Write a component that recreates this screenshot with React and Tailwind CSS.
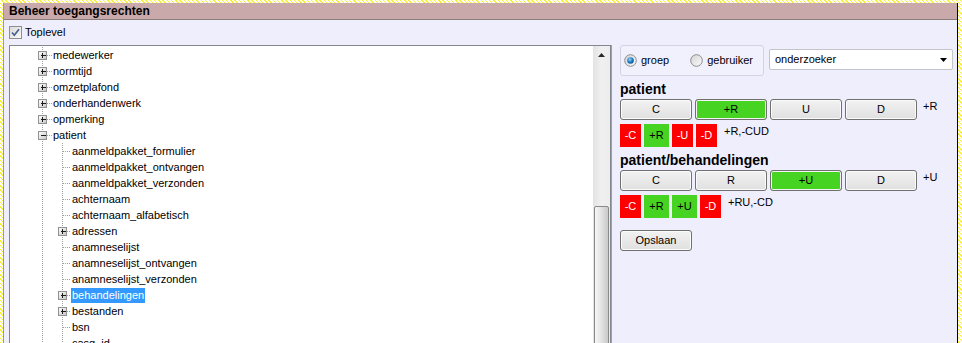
const treeRows = [
  { level: 0, text: 'medewerker', exp: '+' },
  { level: 0, text: 'normtijd', exp: '+' },
  { level: 0, text: 'omzetplafond', exp: '+' },
  { level: 0, text: 'onderhandenwerk', exp: '+' },
  { level: 0, text: 'opmerking', exp: '+' },
  { level: 0, text: 'patient', exp: '-' },
  { level: 1, text: 'aanmeldpakket_formulier' },
  { level: 1, text: 'aanmeldpakket_ontvangen' },
  { level: 1, text: 'aanmeldpakket_verzonden' },
  { level: 1, text: 'achternaam' },
  { level: 1, text: 'achternaam_alfabetisch' },
  { level: 1, text: 'adressen', exp: '+' },
  { level: 1, text: 'anamneselijst' },
  { level: 1, text: 'anamneselijst_ontvangen' },
  { level: 1, text: 'anamneselijst_verzonden' },
  { level: 1, text: 'behandelingen', exp: '+', selected: true },
  { level: 1, text: 'bestanden', exp: '+' },
  { level: 1, text: 'bsn' },
  { level: 1, text: 'casg_id' },
]

const sections = [
  {
    title: 'patient',
    buttons: [
      ['C', false],
      ['+R', true],
      ['U', false],
      ['D', false],
    ],
    summary: '+R',
    chips: [
      ['-C', 'red', 21],
      ['+R', 'green', 25],
      ['-U', 'red', 21],
      ['-D', 'red', 21],
    ],
    detail: '+R,-CUD',
  },
  {
    title: 'patient/behandelingen',
    buttons: [
      ['C', false],
      ['R', false],
      ['+U', true],
      ['D', false],
    ],
    summary: '+U',
    chips: [
      ['-C', 'red', 21],
      ['+R', 'green', 25],
      ['+U', 'green', 25],
      ['-D', 'red', 21],
    ],
    detail: '+RU,-CD',
  },
]

const Dots = (props) => (
  <line stroke="#a0a0a0" strokeDasharray="1 1" {...props} />
)

const Expander = ({ cx, sign }) => (
  <g>
    <rect x={cx - 3.5} y="4.5" width="8" height="8" fill="url(#expGrad)" stroke="#919191" />
    <line x1={cx - 1.5} y1="8.5" x2={cx + 3.5} y2="8.5" stroke="#1b1b1b" />
    {sign === '+' && <line x1={cx + 0.5} y1="6" x2={cx + 0.5} y2="11" stroke="#1b1b1b" />}
  </g>
)

const TreeRow = ({ level, text, exp, selected }) => {
  const w = level === 0 ? 42 : 61
  return (
    <div className="flex h-[16px] items-center">
      <svg width={w} height="16" className="shrink-0" shapeRendering="crispEdges">
        <Dots x1="32.5" y1="0" x2="32.5" y2="16" />
        {level === 1 && <Dots x1="52.5" y1="0" x2="52.5" y2="16" />}
        {level === 0 && exp && <Dots x1="37" y1="8.5" x2="42" y2="8.5" />}
        {level === 0 && exp && <Expander cx={32} sign={exp} />}
        {level === 1 && !exp && <Dots x1="53" y1="8.5" x2="61" y2="8.5" />}
        {level === 1 && exp && <Dots x1="57" y1="8.5" x2="61" y2="8.5" />}
        {level === 1 && exp && <Expander cx={52} sign={exp} />}
      </svg>
      <span
        className={`px-[1px] text-[11px] leading-[15px] whitespace-nowrap ${
          selected ? 'bg-[#3399ff] text-white' : 'text-black'
        }`}
      >
        {text}
      </span>
    </div>
  )
}

const Radio = ({ checked, id }) => (
  <svg width="13" height="13" className="shrink-0">
    <defs>
      <linearGradient id={`rg${id}`} x1="0" y1="0" x2="1" y2="1">
        <stop offset="0" stopColor="#d4d4d4" />
        <stop offset="1" stopColor="#fbfbfb" />
      </linearGradient>
      <radialGradient id={`rd${id}`} cx="0.4" cy="0.35" r="0.7">
        <stop offset="0" stopColor="#8fd6ff" />
        <stop offset="0.6" stopColor="#1d78c0" />
        <stop offset="1" stopColor="#0d4f8c" />
      </radialGradient>
    </defs>
    <circle cx="6.5" cy="6.5" r="5.8" fill={`url(#rg${id})`} stroke="#8c8c8c" />
    {checked && <circle cx="6.5" cy="6.5" r="3.3" fill={`url(#rd${id})`} />}
  </svg>
)

const GrayButton = ({ label, active }) => (
  <div
    className={`w-[72px] h-[21px] flex items-center justify-center rounded-[3px] border border-[#707070] text-[11px] text-black ${
      active
        ? 'bg-[#47d322] shadow-[inset_0_0_0_1px_#f4f4f4]'
        : 'bg-gradient-to-b from-[#f2f2f2] to-[#e0e0e0] shadow-[inset_0_0_0_1px_#fbfbfb]'
    }`}
  >
    {label}
  </div>
)

export default function App() {
  return (
    <div className="w-[962px] h-[343px] overflow-hidden pt-[3px] pl-[3px] pr-[4px] bg-[repeating-linear-gradient(45deg,#f7ef3a_0px,#f7ef3a_1px,#fffef0_1px,#fffef0_3px)] font-['Liberation_Sans',Arial,sans-serif]">
      <div className="h-[400px] bg-[#eeeefc] border-l border-l-[#9a9a9a] border-r border-r-black">
        {/* Header */}
        <div className="h-[17px] bg-[#c9a9a9] border-b border-b-[#8a7d7e] pl-[5px] flex items-center">
          <span className="text-[12px] font-bold leading-[16px] text-black">Beheer toegangsrechten</span>
        </div>

        {/* Toplevel */}
        <div className="h-[25px] flex items-center pl-[5px] gap-[3px]">
          <svg width="13" height="13" className="shrink-0" shapeRendering="crispEdges">
            <defs>
              <linearGradient id="cbGrad" x1="0" y1="0" x2="1" y2="1">
                <stop offset="0" stopColor="#d9d9d9" />
                <stop offset="1" stopColor="#fafafa" />
              </linearGradient>
            </defs>
            <rect x="0.5" y="0.5" width="12" height="12" fill="url(#cbGrad)" stroke="#8e8f8f" />
            <path d="M3 6.5 L5.3 9.2 L10 3.2" fill="none" stroke="#4b5f8e" strokeWidth="1.7" shapeRendering="auto" />
          </svg>
          <span className="text-[11px] text-black">Toplevel</span>
        </div>

        <div className="flex">
          {/* Tree */}
          <div className="ml-[5px] w-[602px] h-[310px] shrink-0 border border-[#828790] bg-white flex">
            <svg width="0" height="0" className="absolute">
              <defs>
                <linearGradient id="expGrad" x1="0" y1="0" x2="1" y2="1">
                  <stop offset="0" stopColor="#ffffff" />
                  <stop offset="1" stopColor="#c6c6c6" />
                </linearGradient>
              </defs>
            </svg>
            <div className="flex-1 pt-[1px] overflow-hidden">
              {treeRows.map((r) => (
                <TreeRow key={r.text} {...r} />
              ))}
            </div>
            <div className="w-[17px] shrink-0 flex flex-col bg-gradient-to-r from-[#e3e3e3] via-[#f0f0f0] to-[#ededed]">
              <div className="h-[17px] flex items-center justify-center">
                <svg width="7" height="4">
                  <polygon points="3.5,0 7,4 0,4" fill="#2a2a2a" />
                </svg>
              </div>
              <div className="h-[143px]" />
              <div className="flex-1 mx-[1px] rounded-[2px] border border-[#8a8a8a] bg-gradient-to-r from-[#f6f6f6] via-[#e2e2e2] to-[#c9c9c9]" />
            </div>
          </div>

          {/* Right panel */}
          <div className="flex-1 pl-[8px] border-l border-l-[#a0a0a8]">
            <div className="flex items-start">
              <div className="w-[144px] h-[31px] rounded-[3px] border border-[#d3d3e3] bg-[#f1f1fd] flex items-center pl-[3px]">
                <Radio checked id="a" />
                <span className="ml-[4px] text-[11px] text-black">groep</span>
                <div className="ml-[21px] flex items-center">
                  <Radio id="b" />
                  <span className="ml-[4px] text-[11px] text-black">gebruiker</span>
                </div>
              </div>
              <div className="ml-[5px] mt-[4px] w-[184px] h-[21px] rounded-[2px] border border-[#c4c4cc] bg-white flex items-center justify-between pl-[5px] pr-[5px]">
                <span className="text-[11px] text-black">onderzoeker</span>
                <svg width="7" height="4">
                  <polygon points="0,0 7,0 3.5,4" fill="#000" />
                </svg>
              </div>
            </div>

            {sections.map((s) => (
              <div key={s.title} className="mt-[5px]">
                <div className="h-[16px] text-[14px] leading-[16px] font-bold text-black">{s.title}</div>
                <div className="mt-[2px] flex items-start">
                  <div className="flex gap-[3px]">
                    {s.buttons.map(([label, active]) => (
                      <GrayButton key={label} label={label} active={active} />
                    ))}
                  </div>
                  <span className="ml-[6px] text-[11px] leading-[13px] pt-[1px] text-black">{s.summary}</span>
                </div>
                <div className="mt-[4px] flex items-start">
                  <div className="flex gap-[3px]">
                    {s.chips.map(([label, color, w]) => (
                      <div
                        key={label}
                        style={{ width: w }}
                        className={`h-[23px] flex items-center justify-center text-[11px] ${
                          color === 'red' ? 'bg-[#ff0000] text-white' : 'bg-[#47d322] text-black'
                        }`}
                      >
                        {label}
                      </div>
                    ))}
                  </div>
                  <span className="ml-[7px] pt-[1px] text-[11px] leading-[13px] text-black">{s.detail}</span>
                </div>
              </div>
            ))}

            <div className="mt-[12px]">
              <GrayButton label="Opslaan" />
            </div>
          </div>
        </div>
      </div>
    </div>
  )
}
